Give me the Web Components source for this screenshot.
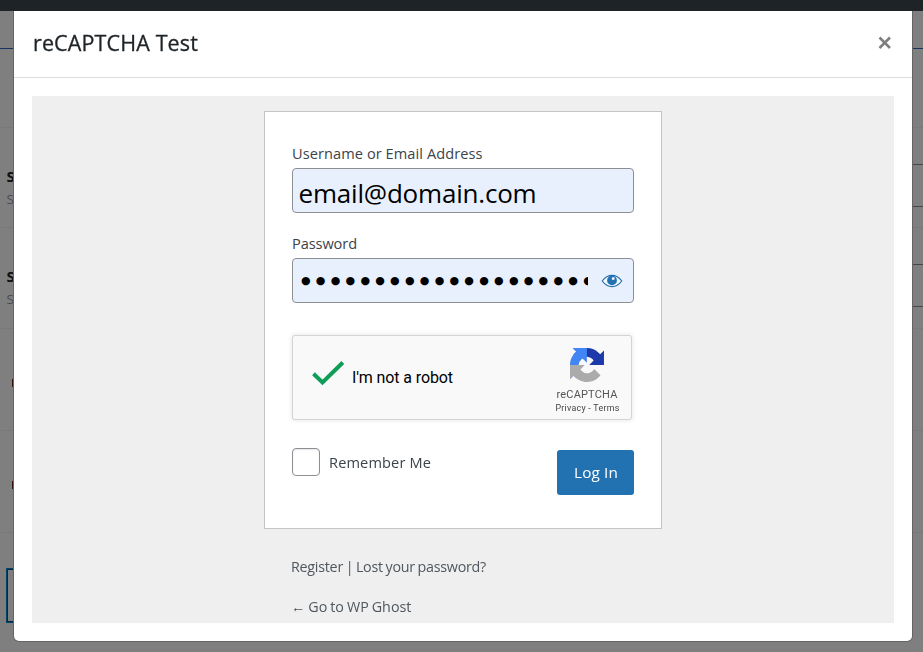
<!DOCTYPE html>
<html lang="en">
<head>
<meta charset="utf-8">
<title>reCAPTCHA Test</title>
<style>
html,body{margin:0;height:100%;overflow:hidden}
body{font-family:"Open Sans","Noto Sans",sans-serif;background:#7f7f7f;color:#1d2327}
</style>
</head>
<body>
<admin-page></admin-page>
<test-dialog>
  <fit-text slot="title" w="165">reCAPTCHA Test</fit-text>
  <login-form></login-form>
</test-dialog>
<script>
const define=(name,html,init)=>customElements.define(name,class extends HTMLElement{
  connectedCallback(){
    if(this.shadowRoot)return;
    this.attachShadow({mode:'open'}).innerHTML=html;
    if(init)init(this,this.shadowRoot);
  }
});

define('settings-row',`<style>
:host{display:flex;box-sizing:border-box;height:var(--h,101px);border-top:1px solid #797979;align-items:flex-start}
div[id]{display:flex;flex:1;justify-content:space-between;align-items:flex-start}
.l{padding:38px 0 0 6.5px;width:7.5px;overflow:hidden;white-space:nowrap}
b{display:block;font-size:15px;line-height:20px;color:#0e1013}
small{display:block;font-size:13.5px;line-height:27px;color:#4a4c58}
.r{box-sizing:border-box;width:12px;height:43px;margin-top:36px;border:solid #464749;border-width:1px 0}
.m{width:3px;height:8px;margin:50px 0 0 12px;background:#35110e}
.box{box-sizing:border-box;width:20px;height:55px;margin:35px 0 0 6px;border:1px solid #004568;box-shadow:inset 0 0 0 1px #06283b}
</style><div id="row"></div>`,(el,root)=>{
  root.getElementById('row').innerHTML={text:'<div class="l"><b>S</b><small>S</small></div><div class="r"></div>',mark:'<div class="m"></div>',box:'<div class="box"></div>'}[el.getAttribute('kind')];
});

define('admin-page',`<style>
:host{display:block;height:652px;background:#7f7f7f;overflow:hidden}
.bar{height:11px;background:#1d2327}
.top{height:37px;border-bottom:1px solid #17345f}
.gap{height:78px}
</style><div class="bar"></div><div class="top"></div><div class="gap"></div>
<settings-row kind="text" style="--h:100px"></settings-row>
<settings-row kind="text"></settings-row>
<settings-row kind="mark" style="--h:102px"></settings-row>
<settings-row kind="mark" style="--h:102px"></settings-row>
<settings-row kind="box" style="--h:120px"></settings-row>`);

define('test-dialog',`<style>
:host{position:fixed;left:14px;top:11px;width:898px;height:630px;background:#fff;border-radius:0 0 5px 5px;box-shadow:0 0 0 1px #656565;clip-path:inset(0 -1px -1px -1px);display:flex;flex-direction:column}
header{display:flex;justify-content:space-between;align-items:flex-start;box-sizing:border-box;height:67px;padding:0 20px 0 19px;border-bottom:1px solid #dcdcde;font-size:21.5px;line-height:64px}
::slotted(fit-text){-webkit-text-stroke:.3px #1d2327}
svg{margin-top:25px}
main{flex:1;margin:18px;background:#efefef;overflow:hidden}
</style><header><slot name="title"></slot>
<svg width="14" height="14" viewBox="0 0 14 14"><path d="M1.500 1.500 12 12M12 1.500 1.500 12" fill="none" stroke="#7e7e7e" stroke-width="2.500"/></svg></header>
<main><slot></slot></main>`);

define('text-field',`<style>
:host{display:block}
label{display:block;font-size:14.6px;line-height:20px;color:#3c434a;height:25px}
.f{box-sizing:border-box;height:45px;border:1px solid #8c8f94;border-radius:4px;background:#e8f0fe;display:flex;align-items:center;justify-content:space-between;padding:0 10px 0 6px;color:#000}
</style><label><slot name="label"></slot></label><div class="f"><slot></slot></div>`);

define('password-dots',`<style>
:host{display:block;width:289px;height:43px;overflow:hidden;white-space:nowrap;font:11px/44px "DejaVu Sans",sans-serif}
fit-text{padding-left:2px}
</style><fit-text w="297">●●●●●●●●●●●●●●●●●●●●</fit-text>`);

define('eye-icon',`<style>:host{display:block;height:20px}svg{display:block}</style>
<svg width="22" height="20" viewBox="0 0 22 20"><path d="M1.200 10Q5.500 4.400 11 4.400t9.800 5.600Q16.500 15.600 11 15.600T1.200 10Z" fill="#f4f8ff" stroke="#2271b1" stroke-width="1.200"/><circle cx="11" cy="9.400" r="4.900" fill="#2271b1"/><circle cx="12.200" cy="7.400" r="1.500" fill="#e8f0fe"/></svg>`);

define('captcha-box',`<style>
:host{display:flex;justify-content:space-between;box-sizing:border-box;width:340px;height:85px;border:1px solid #d3d3d3;border-radius:3px;background:#f9f9f9;box-shadow:0 0 4px 1px rgba(0,0,0,.08);font-family:Roboto,sans-serif;font-weight:400;color:#000}
.l{display:flex;align-items:flex-start;padding:24px 0 0 18px;gap:7px}
.t{font-size:16px;line-height:20px;padding-top:8px}
.r{display:flex;flex-direction:column;align-items:center;width:64px;padding:12px 12px 0 0;color:#555}
.r svg{display:block}
.n{font-size:11px;line-height:14px;margin-top:6px}
.p{font-size:8.800px;line-height:12px;padding-left:1px;color:#444}
</style>
<div class="l"><svg width="34" height="28" viewBox="0 0 34 28"><path d="M2.500 13.800 11.500 22.500 31.800 2.500" fill="none" stroke="#0f9d58" stroke-width="4"/></svg>
<fit-text class="t" w="101">I'm not a robot</fit-text></div>
<div class="r"><svg width="34" height="34" viewBox="0 0 64 64">
<path fill="#1c3aa9" d="M64 31.955l-.033-1.370V4.687l-7.160 7.161C50.948 4.674 42.033.093 32.051.093c-10.389 0-19.622 4.960-25.458 12.640l11.736 11.860a15.550 15.550 0 0 1 4.754-5.334c2.050-1.600 4.952-2.906 8.968-2.906.200 0 .400.030.570.085 4.976.393 9.288 3.138 11.827 7.124l-8.307 8.307L64 31.955"/>
<path fill="#4285f4" d="M31.862.094l-1.370.033H4.594l7.161 7.160C4.581 13.147 0 22.061 0 32.043c0 10.389 4.960 19.622 12.640 25.458l11.860-11.736a15.550 15.550 0 0 1-5.334-4.754c-1.600-2.050-2.906-4.952-2.906-8.968 0-.200.030-.400.085-.570.393-4.976 3.138-9.288 7.124-11.827l8.307 8.307L31.862.094"/>
<path fill="#ababab" d="M.001 32.045l.033 1.370v25.898l7.160-7.161c5.859 7.174 14.774 11.755 24.756 11.755 10.389 0 19.622-4.960 25.458-12.640l-11.736-11.860a15.550 15.550 0 0 1-4.754 5.334c-2.050 1.600-4.952 2.906-8.968 2.906-.200 0-.400-.030-.570-.085-4.976-.393-9.288-3.138-11.827-7.124l8.307-8.307c-10.522.041-22.400.066-27.859-.086"/></svg>
<fit-text class="n" w="61">reCAPTCHA</fit-text><fit-text class="p" w="64">Privacy - Terms</fit-text></div>`);

define('login-form',`<style>
:host{display:block;padding:15px 0 0 232px;font-size:14.600px;font-weight:400}
.card{box-sizing:border-box;width:398px;height:418px;border:1px solid #c3c4c7;background:#fff;padding:31px 27px 0}
.card>text-field+text-field{margin-top:20px}
captcha-box{margin-top:32px}
.foot{display:flex;justify-content:space-between;align-items:flex-start;margin-top:28px;color:#3c434a}
.rem{display:flex;gap:9px;line-height:28px}
.rem i{box-sizing:border-box;width:28px;height:28px;border:1px solid #8c8f94;border-radius:4px;box-shadow:inset 0 1px 2px rgba(0,0,0,.1);background:#fff}
.btn{box-sizing:border-box;width:77px;height:45px;margin-top:2px;padding-left:1px;border-radius:3px;background:#2271b1;color:#fff;text-align:center;line-height:45px;font-size:15.300px}
nav{padding:28px 0 0 27px;line-height:20px;color:#50575e;font-size:14.300px;word-spacing:-.800px}
nav fit-text{display:block;height:40px}
</style>
<div class="card">
<text-field><fit-text slot="label" w="190.500">Username or Email Address</fit-text><fit-text w="238" style="font-size:26px;line-height:40px;padding-top:4px;margin-left:-.500px">email@domain.com</fit-text></text-field>
<text-field><fit-text slot="label" w="65">Password</fit-text><password-dots></password-dots><eye-icon></eye-icon></text-field>
<captcha-box></captcha-box>
<div class="foot"><div class="rem"><i></i><fit-text w="102">Remember Me</fit-text></div><div class="btn"><fit-text w="44">Log In</fit-text></div></div>
</div>
<nav><fit-text w="195">Register | Lost your password?</fit-text><fit-text w="120.500">← Go to WP Ghost</fit-text></nav>`);

// One line of text, tracked so that it spans the given width.
// Registered last: its measurement needs the styles of the elements around it.
define('fit-text','<style>:host{display:inline-block;white-space:pre}span{display:inline-block}</style><span><slot></slot></span>',(el,root)=>{
  const s=root.querySelector('span'),w=+el.getAttribute('w'),n=el.textContent.length;
  s.style.letterSpacing=(w-s.getBoundingClientRect().width)/n+'px';
});
</script>
</body>
</html>
